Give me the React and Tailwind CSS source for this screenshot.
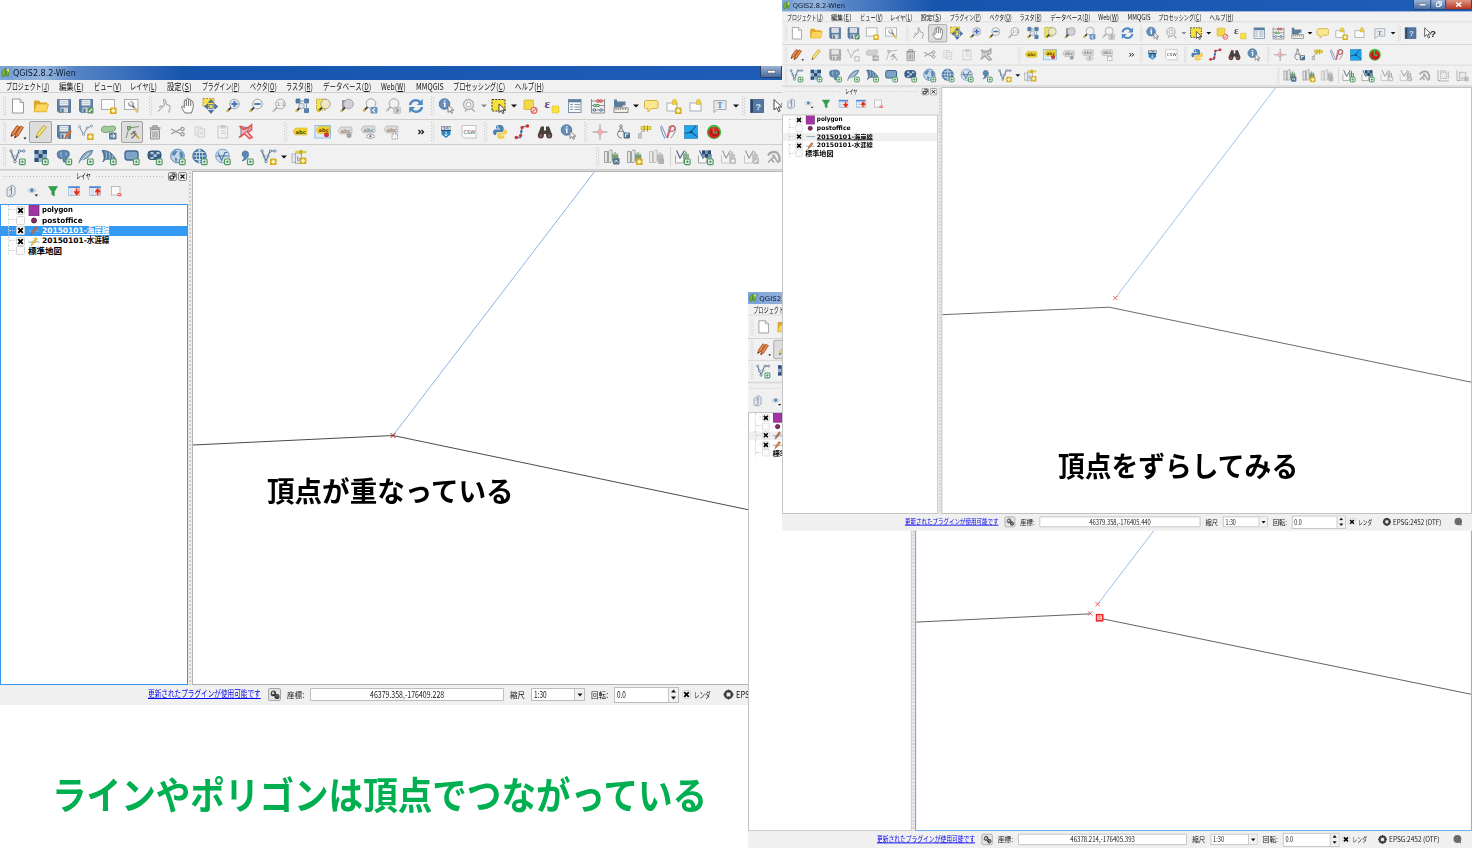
import React, { useLayoutEffect, useRef } from "react";

/* Text squeezed horizontally so that it fills exactly `w` pixels. */
function Fit({ w, className = "", children }) {
  const ref = useRef(null);
  useLayoutEffect(() => {
    const el = ref.current;
    const fit = () => {
      el.style.transform = `scaleX(${w / el.offsetWidth})`;
    };
    fit();
    document.fonts?.ready.then(fit);
  }, [w]);
  return (
    <span className="flex shrink-0 items-center" style={{ width: w }}>
      <span ref={ref} className={`inline-block shrink-0 origin-left whitespace-nowrap ${className}`}>
        {children}
      </span>
    </span>
  );
}

/* ---------- icon parts, drawn on a 20 x 20 grid ---------- */

const Plus = ({ x = 11, y = 11.5 }) => (
  <g>
    <rect x={x + 0.5} y={y + 0.5} width="5.6" height="5.6" rx="1" fill="#f2faf2" stroke="#4f9560" strokeWidth="1.2" />
    <path d={`M${x + 3.3} ${y + 1.8}v3M${x + 1.8} ${y + 3.3}h3`} stroke="#4f9560" strokeWidth="1" />
  </g>
);
const Star = ({ x = 11, y = 11.5 }) => (
  <g>
    <rect x={x} y={y} width="6.6" height="6.6" rx="1.2" fill="#d5ab20" />
    <circle cx={x + 3.3} cy={y + 3.3} r="1.7" fill="#fff6b8" />
    <path d={`M${x + 3.3} ${y + 1}v4.600M${x + 1} ${y + 3.3}h4.600`} stroke="#fff6b8" strokeWidth="0.8" />
  </g>
);
const Lens = ({ cx = 11.5, cy = 8, r = 4.8, fill = "#eef2f4", handle = "#3a3a3a", tip = "#e2c02a" }) => (
  <g>
    <path d={`M${cx - r * 0.7} ${cy + r * 0.7}L${cx - r - 2.5} ${cy + r + 2.5}`} stroke={handle} strokeWidth="1.900" />
    <path d={`M${cx - r - 1.2} ${cy + r + 1.2}L${cx - r - 3} ${cy + r + 3}`} stroke={tip} strokeWidth="1.700" />
    <circle cx={cx} cy={cy} r={r} fill={fill} stroke="#a3a6a3" strokeWidth="1" />
  </g>
);
const Floppy = () => (
  <g>
    <path d="M3.500 3.500h13v13h-11.500l-1.500-1.500z" fill="#5b7fa5" stroke="#4b6a8c" strokeWidth=".8" />
    <rect x="5.600" y="3.800" width="8.800" height="5.700" fill="#e9ecef" />
    <path d="M6.500 5.500h7M6.500 7.500h7" stroke="#b9bec4" strokeWidth=".7" />
    <rect x="6.500" y="11.500" width="7.500" height="5" fill="#d7dadd" />
    <rect x="7.500" y="12.500" width="2" height="4" fill="#4b6a8c" />
  </g>
);
const VLine = () => (
  <g fill="#dce6ee" stroke="#4d6c8a" strokeWidth=".7">
    <path d="M3 4l4 10.500L11 4h4.500" fill="none" strokeWidth="1.100" />
    <circle cx="3" cy="4" r="1.200" /><circle cx="5" cy="9.200" r="1.100" /><circle cx="7" cy="14.500" r="1.300" />
    <circle cx="9" cy="9.200" r="1.100" /><circle cx="11.500" cy="4" r="1.200" /><circle cx="15.800" cy="4" r="1.200" />
  </g>
);
const Globe = ({ land }) => (
  <g>
    <circle cx="9.500" cy="9" r="6.800" fill={land ? "#c3d6e7" : "#416f9e"} stroke="#4f7ba5" strokeWidth=".9" />
    {land ? (
      <path d="M4.500 5.500l2.500-2 2.500.8-1.500 2.200-1.500 2.500-2.500-1zM11.500 4l3 1.500 1 3.500-2 3-1.800-2.300zM7 10.500l2.500 1.200-1 3-1.500-1z" fill="#5b88b2" />
    ) : (
      <path d="M3 9h13M4.500 5.500h10M4.500 12.500h10M9.500 2.500v13M9.500 2.500c-4.500 4-4.500 9 0 13M9.500 2.500c4.500 4 4.500 9 0 13" fill="none" stroke="#dbe8f2" strokeWidth=".9" />
    )}
  </g>
);
const Label = ({ c = "#f2d22e", t = "#5b4a00", y = 6 }) => (
  <g>
    <path d={`M3 ${y + 3.5}l2.500-3.500h10.500q1 0 1 1v5q0 1-1 1h-10.500z`} fill={c} stroke={t === "#909090" ? "#aaa" : "#c9b136"} strokeWidth=".6" />
    <text x="5.500" y={y + 5.5} fontSize="5.200" fontWeight="bold" fontFamily="DejaVu Sans" fill={t}>abc</text>
  </g>
);
const Sheet = ({ x = 3, y = 4, w = 11, h = 10 }) => (
  <rect x={x} y={y} width={w} height={h} fill="#fbfbfb" stroke="#a2a6a9" strokeWidth=".9" />
);
const Books = () => (
  <g fill="#e4e6e6" stroke="#8d9092" strokeWidth=".8">
    <path d="M2.500 4.500v11h3v-11zM6.500 4.500l1.500-1.500h2v11.500l-1 1H6.500z" />
    <rect x="10" y="8" width="6.500" height="7.500" fill="#9fb09f" stroke="none" />
    <path d="M11 13V6.500M13 13V5M15 13V6.500" stroke="#5d8b5d" strokeWidth="1.100" fill="none" />
  </g>
);
const VSheet = () => (
  <g>
    <path d="M2.500 8.500v7.500h8v-3" fill="#f7f7f7" stroke="#a3a8a3" strokeWidth="1" />
    <path d="M3.500 3.500l3.500 7.500 4.500-7.500" fill="none" stroke="#4a6580" strokeWidth="1.100" />
    <path d="M11 12.500V6.500M13 12V4.500M15 12V7" fill="none" stroke="#4d8055" strokeWidth="1.200" />
  </g>
);
const Cursor = ({ x = 11, y = 9 }) => (
  <path d={`M${x} ${y}v7.500l2-1.800 1.400 2.700 1.200-.6-1.400-2.600h2.700z`} fill="#f5f5f5" stroke="#6b6b6b" strokeWidth=".8" />
);

const icons = {
  doc: <g><path d="M4.500 3h7.500l3.500 3.500V17h-11z" fill="#fff" stroke="#8a8e91" strokeWidth=".9" /><path d="M12 3v3.500h3.500" fill="#e4e6e8" stroke="#8a8e91" strokeWidth=".8" /></g>,
  folder: <g><path d="M3 15.500V4.500h5l1.500 2h6.500v9z" fill="#dba72b" /><path d="M3 15.800L5.500 8h12l-2.200 7.800z" fill="#fbd65a" stroke="#dba72b" strokeWidth=".7" /></g>,
  save: <Floppy />,
  saveas: <g><Floppy /><rect x="11.500" y="11.500" width="6" height="6" rx="1" fill="#5c9768" /><path d="M13 16l3-3" stroke="#e8f5e8" strokeWidth="1.300" /></g>,
  composer: <g><Sheet x={2.5} y={3.5} w={13} h={10} /><Star /></g>,
  manager: <g><Sheet x={2.5} y={3.5} w={13.5} h={10} /><path d="M10 9l2.500 3" stroke="#666" strokeWidth="1.800" /><path d="M12.500 12l3.500 4.500" stroke="#dfc26a" strokeWidth="2.200" /><circle cx="9" cy="8" r="2.300" fill="#e0e3e6" stroke="#7c8083" /><path d="M7.500 5.500l1.500 2.200" stroke="#fff" strokeWidth="1.500" /></g>,
  touch: <g><path d="M5 11l3-1.500-1-5.500c.3-1.300 1.600-1 1.900.1l1.100 4.400 2.700.8c1.200.6 1 2 .4 4l-.9 3.200" fill="#f3f3f3" stroke="#8b8b8b" strokeWidth=".9" transform="translate(1.500 0)" /><path d="M3 15.500l4.500-4.500M4 11.500l2.500-2" stroke="#8b8b8b" fill="none" /></g>,
  hand: <path d="M7 17c-2-3-3.500-5-3.300-6.500.8-.8 1.800 0 2.600 1.200V5c.4-1.300 1.700-1.300 2 0V3.200c.5-1.200 1.900-1.200 2.200 0V4c.5-1.100 1.800-1 2.100.1v1.200c.5-1 1.900-.8 2.100.3 1 3.500.8 5-.2 8L13.500 17zM8.300 5v5M10.500 4v6M12.700 5v5" fill="#fbfbfb" stroke="#666" strokeWidth=".9" />,
  pansel: <g><path d="M3 2.500h11v8H3z" fill="#fbe04d" stroke="#a6851c" strokeDasharray="2 1" strokeWidth=".8" /><path d="M11 3.500l2.700 3h-5.400zM11 17.500l2.700-3.200h-5.400zM4.500 10.500l3.200-2.700v5.400zM17.800 10.500l-3.200-2.700v5.400z" fill="#4671a8" stroke="#355a8c" strokeWidth=".6" /><rect x="9" y="8.500" width="4" height="4" fill="#f4dd55" stroke="#4671a8" strokeWidth=".8" /></g>,
  zin: <g><Lens fill="#dce6f2" /><path d="M11.500 5v6M8.500 8h6" stroke="#4973b2" strokeWidth="1.900" /></g>,
  zout: <g><Lens fill="#eef0f2" /><path d="M8.500 8h6" stroke="#4973b2" strokeWidth="1.900" /></g>,
  znat: <g><Lens fill="#f4f4f2" handle="#b0b0b0" tip="#c4c4c4" /><text x="8" y="10" fontSize="5" fontFamily="DejaVu Sans" fill="#777">1:1</text></g>,
  zfull: <g><path d="M4 3h4v4H4zM12.500 3h4v4h-4zM12.500 12.500h4v4h-4z" fill="#4f7fae" stroke="#3a6390" strokeWidth=".7" /><path d="M7 5h6M14.500 6v8M7 7l6 6" stroke="#7c9cbc" strokeWidth="1" /><Lens cx={9.5} cy={10} r={2.8} fill="#dbe4ec" /></g>,
  zsel: <g><rect x="2.500" y="3" width="9" height="11" fill="#f8e34a" stroke="#8e7d12" strokeDasharray="1.500 1" strokeWidth=".7" /><Lens fill="#ece9c0" /></g>,
  zlayer: <g><rect x="5" y="4" width="8" height="8" fill="#9b92a3" /><Lens fill="#d4cfd8" /></g>,
  zlast: <g><Lens cx={11} cy={7.5} /><rect x="10.500" y="11" width="7" height="6.500" rx="1" fill="#6b94c2" /><path d="M15 12.300l-2.300 2 2.300 2" fill="none" stroke="#fff" strokeWidth="1.100" /></g>,
  znext: <g><Lens cx={11} cy={7.5} handle="#b0b0b0" tip="#c4c4c4" /><rect x="10.500" y="11" width="7" height="6.500" rx="1" fill="#d0d2d0" stroke="#aaa" strokeWidth=".5" /><path d="M13 12.300l2.300 2-2.300 2" fill="none" stroke="#888" strokeWidth="1.100" /></g>,
  refresh: <g fill="none" stroke="#5289c2" strokeWidth="2.400"><path d="M4 9c1-5 7.500-6.500 10.500-2.500M16 11c-1 5-7.500 6.500-10.500 2.500" /><path d="M16.800 3v6h-6zM3.200 17v-6h6z" fill="#5289c2" stroke="none" /></g>,
  identify: <g><circle cx="8.500" cy="8" r="5.300" fill="#628fbb" stroke="#476f98" strokeWidth=".8" /><path d="M7.500 7.300h1.300v3.700M8.700 4.200v1.400" stroke="#fff" strokeWidth="1.500" fill="none" /><Cursor x={12} y={9} /></g>,
  action: <g><circle cx="9.500" cy="8.500" r="5" fill="#ededed" stroke="#b0b0b0" strokeWidth="1.300" /><circle cx="9.500" cy="8.500" r="2.300" fill="#fff" stroke="#a8a8a8" /><path d="M12 12l4 4M8 13.500l-2 2" stroke="#b0b0b0" strokeWidth="1.500" /></g>,
  select: <g><rect x="3" y="3.500" width="13" height="11.500" fill="#f7e23c" stroke="#333" strokeWidth="1" strokeDasharray="2 1.200" /><path d="M10 8v8.500l2.200-2 1.500 3 1.300-.7-1.500-2.900h3z" fill="#fff" stroke="#222" strokeWidth=".8" /></g>,
  desel: <g><rect x="4" y="4" width="9.500" height="9.500" rx="1" fill="#f3d84a" stroke="#d0ae23" strokeWidth=".7" /><circle cx="14" cy="14.300" r="3" fill="#fbe3e3" stroke="#de6666" strokeWidth="1.200" /><path d="M12 16.300l4-4" stroke="#de6666" strokeWidth="1.100" /></g>,
  expr: <g><text x="2.500" y="11.500" fontSize="13" fontWeight="bold" fontFamily="Liberation Serif" fill="#6b3d78">ε</text><rect x="10" y="10" width="7" height="7" rx="1" fill="#f9e23c" stroke="#caa923" strokeWidth=".7" strokeDasharray="1.500 1" /></g>,
  table: <g><rect x="3.500" y="3.500" width="12.500" height="13" fill="#f7f7f7" stroke="#7188a0" strokeWidth=".9" /><path d="M3.500 5h12.500" stroke="#5b7f9e" strokeWidth="2.600" /><path d="M5 8.500h3M5 11h3M5 13.500h3M9.500 8.500h5.500M9.500 11h5.500M9.500 13.500h5.500" stroke="#88a1b9" strokeWidth="1.100" /></g>,
  abacus: <g><path d="M3.500 3v14M16.500 3v14M3.500 5h13M3.500 9.500h13M3.500 14h13M3.500 17h13" stroke="#8b8b8b" strokeWidth="1" /><g fill="#fff" strokeWidth="1.100"><circle cx="10" cy="5" r="1.200" stroke="#c83737" /><circle cx="13" cy="5" r="1.200" stroke="#c83737" /><circle cx="7" cy="9.500" r="1.200" stroke="#48945b" /><circle cx="10" cy="9.500" r="1.200" stroke="#48945b" /><circle cx="6.500" cy="14" r="1.200" stroke="#4d78a8" /><circle cx="13" cy="14" r="1.200" stroke="#4d78a8" /></g></g>,
  measure: <g><path d="M3 3.500h3v2h8.500v4H11.500v1.500H3z" fill="#5b7d9c" /><rect x="3" y="11.800" width="14" height="4.700" fill="#f0f0e8" stroke="#777" strokeWidth=".8" /><path d="M5 12v2M7.300 12v2M9.600 12v2M12 12v2M14.500 12v2" stroke="#555" strokeWidth=".7" /></g>,
  tip: <path d="M4.500 4.500h11.500l1 1v6l-1 1H10.500l-3.500 3.500v-3.500H4.500l-1-1V5.500z" fill="#fae88f" stroke="#d0b040" strokeWidth="1" />,
  bmnew: <g><Sheet x={3} y={7} w={10} h={8} /><path d="M8.500 4.500l2-1.500 2 1.500v4h-4z" fill="#f0d233" stroke="#c5ab2e" strokeWidth=".5" /><Star /></g>,
  bm: <g><Sheet x={4} y={7} w={11} h={8} /><path d="M10.500 4.500l2-1.500 2 1.500v4h-4z" fill="#f0d233" stroke="#c5ab2e" strokeWidth=".5" /></g>,
  text: <g><path d="M4 4.500h12v9H7.500l-3.500 3z" fill="#e9ecef" stroke="#9aa3ac" strokeWidth=".9" /><text x="7.300" y="12" fontSize="8" fontWeight="bold" fontFamily="Liberation Serif" fill="#6b8197">T</text></g>,
  help: <g><rect x="3.500" y="3.500" width="13" height="13" fill="#5378a3" stroke="#3f5d80" strokeWidth=".8" /><path d="M5 3.500v13" stroke="#2c4562" strokeWidth="2" /><text x="8.500" y="13.500" fontSize="9" fontFamily="Liberation Sans" fontWeight="bold" fill="#dbe6f2">?</text></g>,
  what: <g><path d="M4 3.500v10.500l2.600-2.300 2 4 1.600-.8-2-3.900h3.600z" fill="#fff" stroke="#333" strokeWidth=".9" /><text x="10.500" y="15" fontSize="12" fontFamily="Liberation Sans" fontWeight="bold" fill="#222">?</text></g>,

  pencils: <g><path d="M3 14.500l1-4L9 3.500l2.500 1.500-5 7.500zM6.500 16l1-4 5-8L15.500 5.500l-5.500 8.500z" fill="#dc6f2b" stroke="#8d4420" strokeWidth=".7" /><path d="M5 12L10 4.500M9 13L14 5" stroke="#f3ae80" strokeWidth=".9" /><path d="M3 14.500l.5-1.900 1.200.8zM6.500 16l.5-1.900 1.200.7z" fill="#222" /><path d="M15.500 15.500h3l-1.500 2z" fill="#111" /></g>,
  pencil: <g><path d="M5 16l.8-3.800L12.500 3.500l2.700 2-7 8.800z" fill="#ecd654" stroke="#b09a35" strokeWidth=".7" /><path d="M7.300 13l6-8" stroke="#fff" strokeOpacity=".5" /><path d="M5 16l.5-2 1.400 1.100z" fill="#333" /></g>,
  saveedit: <g><Floppy /><path d="M11 16.500l.8-3L15.500 8l2 1.400-4.200 6z" fill="#de7a3a" stroke="#a9562b" strokeWidth=".6" /></g>,
  addfeat: <g><path d="M3 4l4.500 8.500L11 6l4.500-2" fill="none" stroke="#7189a2" strokeWidth="1" /><g fill="#e8edf2" stroke="#7189a2" strokeWidth=".7"><circle cx="3.500" cy="4.500" r="1.100" /><circle cx="7.500" cy="12.500" r="1.100" /><circle cx="11" cy="6" r="1.100" /><circle cx="15.500" cy="4" r="1.100" /></g><Star /></g>,
  movefeat: <g><path d="M2.500 8c0-4.500 3.500-4 6-3.500s8-2 8 1.500-3.500 3.500-6 4S2.500 11.500 2.500 8z" fill="#a5c99e" stroke="#6f9869" strokeWidth=".9" /><rect x="10" y="10.500" width="7.500" height="7" rx="1" fill="#5d809e" /><path d="M11.500 14h4.500M14 12l2 2-2 2" fill="none" stroke="#fff" strokeWidth="1" /></g>,
  node: <g><path d="M4 16L7 6l10-1.500" fill="none" stroke="#7d8d7b" strokeWidth="1" /><rect x="5.500" y="4.500" width="2.800" height="2.800" fill="#9bc58d" stroke="#567a4d" strokeWidth=".7" /><path d="M9 12.500l4.500-3.500M11 9.500l3 3.500" stroke="#6b6b6b" strokeWidth="1.500" /><path d="M13 12l4 4.500" stroke="#cfa42a" strokeWidth="1.800" /><path d="M9.500 16.500l5-5" stroke="#777" strokeWidth="1.200" /></g>,
  trash: <g fill="none" stroke="#959595" strokeWidth="1"><path d="M4.500 6h11M8 6V4h4v2" strokeWidth="1.300" /><path d="M5.500 7.500h9v9.500h-9z" fill="#dadada" /><path d="M8 9.500v6M10 9.500v6M12 9.500v6" /></g>,
  cut: <g fill="none" stroke="#999" strokeWidth="1.200"><path d="M3 7l10 5M3 12l10-5" /><circle cx="14.500" cy="7" r="1.700" /><circle cx="14.500" cy="12.300" r="1.700" /></g>,
  copy: <g fill="#f1f1f1" stroke="#cdcdcd"><rect x="5" y="5" width="6" height="8" /><rect x="8" y="7" width="6.500" height="8" /><path d="M9.500 10h3.500M9.500 12h3.500" /></g>,
  paste: <g fill="#f1f1f1" stroke="#cacaca"><rect x="5" y="4.500" width="9.500" height="11.500" /><rect x="8" y="3.500" width="4" height="2.500" fill="#c8c8c8" /><path d="M8 9h4.500M8 11.500h4.500" /></g>,
  crossed: <g><path d="M5 4.500v10.500L14 6z" fill="#f0b7b7" stroke="#6d7ba3" strokeWidth="1" /><path d="M3.500 4l4.500 3.500 5-2.500 2.500-2v5l-4 2 4.500 5.500-2.500 1-5-5-5.500 4" fill="none" stroke="#e65353" strokeWidth="1.700" /></g>,
  label: <Label />,
  labelpin: <g><rect x="2" y="3.500" width="15.500" height="12.500" fill="#dcecf8" stroke="#8ab8de" strokeWidth=".9" /><Label y={4.5} /><circle cx="13.500" cy="12.800" r="2.500" fill="#c83a3a" /></g>,
  labelpin2: <g><Label c="#dcdcdc" t="#909090" y={5} /><circle cx="14" cy="13.500" r="2.500" fill="#a2a2a2" /></g>,
  labeleye: <g><Label c="#dcdcdc" t="#909090" y={4} /><path d="M8 14.500c2.500-3 6.500-3 9 0-2.500 2.500-6.500 2.500-9 0z" fill="#fff" stroke="#999" /><circle cx="12.500" cy="14.300" r="1.200" fill="#888" /></g>,
  labelmove: <g><Label c="#dcdcdc" t="#909090" y={4} /><path d="M11 12h5.500v5H11z" fill="#f6f6f6" stroke="#9a9a9a" strokeDasharray="2 1" /></g>,
  more: <path d="M7.500 8l2 2-2 2M10.500 8l2 2-2 2" fill="none" stroke="#111" strokeWidth="1.200" />,
  bgb: <g><rect x="5" y="4.500" width="10" height="4.500" fill="#2c4a66" /><text x="5.300" y="8.400" fontSize="4.200" fontWeight="bold" fontFamily="DejaVu Sans" fill="#fff">BGB</text><path d="M5.500 9h9v3.500L10 16 5.500 12.500z" fill="#2f83c2" /><path d="M10 9.500v4.500M8.500 12.500l1.500 1.500 1.500-1.500" stroke="#d4ebfb" fill="none" /></g>,
  csw: <g><path d="M3 3.500h14v12.500H5l-2-2z" fill="#fbfbfb" stroke="#b8b8b8" strokeWidth=".8" /><text x="4.600" y="11.500" fontSize="5" fontFamily="DejaVu Sans" fill="#444">CSW</text></g>,
  python: <g><path d="M9.500 3c-3.500 0-3.500 1.300-3.500 3.500h4v1H4.500c-2 1-2 5 .3 5.500H6c0-2.500 1-3 2.700-3h3.500c1 0 1.500-1 1.500-1.700C13.700 4.300 13 3 9.500 3z" fill="#4a80b3" /><path d="M11 17c3.500 0 3.500-1.300 3.500-3.500h-4v-1H16c1.800-1 1.500-4.800-.7-5.200h-.8c0 2.500-1 3.300-2.700 3.300H8.300c-1 0-1.300 1-1.300 1.700C7 16 7.500 17 11 17z" fill="#f3cf55" /><circle cx="8" cy="5" r=".7" fill="#fff" /></g>,
  route: <g><path d="M4.500 15.500h4L10 5l5.500-1" stroke="#5c80b5" strokeWidth="1.400" fill="none" /><g fill="#d32c2c"><circle cx="4.300" cy="15.500" r="1.700" /><circle cx="8.500" cy="13.500" r="1.600" /><circle cx="10" cy="5.500" r="1.600" /><circle cx="15.500" cy="4" r="1.700" /></g><circle cx="9.300" cy="9.500" r="1.300" fill="#3f67a5" /></g>,
  binoc: <g fill="#47403c"><path d="M6 4.500h3v4h2v-4h3l3 8-3.500 3.500-2.500-4h-2l-2.500 4-3.500-3.500z" /><circle cx="5.800" cy="13.500" r="3" /><circle cx="14.200" cy="13.500" r="3" /><circle cx="5.800" cy="13.700" r="1.500" fill="#9b5a4a" /><circle cx="14.200" cy="13.700" r="1.500" fill="#9b5a4a" /></g>,
  cross: <g><path d="M2.500 10h15M10 2.500v15" stroke="#8b8b8b" strokeWidth=".9" /><circle cx="10" cy="10" r="2.500" fill="#fff" stroke="#dd8080" strokeWidth=".8" /><path d="M8 10h4M10 8v4" stroke="#d87070" strokeWidth=".8" /></g>,
  person: <g><circle cx="8" cy="4.300" r="1.300" fill="none" stroke="#777" /><path d="M7.500 6L4.500 11.500c0 3 2 4.500 4 4.500M8.500 6l3 5M6 9.500c2-.5 3.500 0 4.500 1" fill="none" stroke="#777" strokeWidth="1" /><rect x="10.500" y="10.500" width="6.500" height="6" rx="1" fill="#4d718c" /><path d="M12.500 15v-3h3" stroke="#fff" fill="none" /></g>,
  sat: <g><path d="M6 4.500h10v3H6z" fill="#eedb3a" stroke="#b9a62d" strokeWidth=".6" /><path d="M9.300 3.500v6M12.500 3.500v6" stroke="#a8971e" /><path d="M9 9C6.500 9 5 11 5 13" fill="none" stroke="#999" strokeWidth="1" /><rect x="3.500" y="12" width="2.800" height="4" fill="#d8dce0" stroke="#999" strokeWidth=".7" /></g>,
  vr: <g><path d="M3.500 3.500l5.500 12.500L11.500 4" fill="none" stroke="#9a7fb0" strokeWidth="1" /><path d="M2.500 4.500c1 5 2.500 9 4.500 12" fill="none" stroke="#6d9dd0" strokeWidth="1.100" /><path d="M9.500 16l3.500-11.500c2-1 4-.5 4 1.500s-2 3.500-4.500 3.500" fill="none" stroke="#d65555" strokeWidth="1.300" /><path d="M11 5.500c2-2.500 6-2.500 6.500.5s-2 7-4.500 10" fill="none" stroke="#777" strokeWidth=".8" /></g>,
  tri: <g><rect x="3.500" y="3.500" width="13" height="13" fill="#1fa6ee" /><path d="M3.500 11.500l6.500-1.500 5-6.500M10 10l6.500 5" stroke="#1d5480" strokeWidth="1.100" fill="none" /><circle cx="10" cy="10" r="1.200" fill="#123f63" /><rect x="3.500" y="3.500" width="13" height="13" fill="none" stroke="#3d7fae" strokeWidth=".7" /></g>,
  swirl: <g><circle cx="10" cy="10" r="7.200" fill="#45b945" /><circle cx="10" cy="10.500" r="5.800" fill="#d92424" /><path d="M9.500 3v6c0 2.500 3 2.500 3.500.5" fill="none" stroke="#45b945" strokeWidth="1.300" /><path d="M7.500 8c-1.500 3.500 1 6 4 5.500s3.500-2.500 3-4.500" fill="none" stroke="#8a1212" strokeWidth="1" /></g>,

  vadd: <g><VLine /><Plus /></g>,
  raster: <g><path d="M3.500 3h12.500v12H3.500z" fill="#94b3d0" /><path d="M3.500 3h4v4h-4zM11.500 3H16v4h-4.500zM7.500 7h4v4h-4zM3.500 11h4v4h-4zM11.500 11H16v4h-4.500z" fill="#2f5075" /><Plus /></g>,
  pg: <g><path d="M4 10.500C2.500 6 3.500 4 6 4c2-1 7-1 8.500.5 1.800 2.500.5 5.500-1.500 6.500l-1 1v3H9.500l-1-4.500-1.500 1.500z" fill="#5a86b0" stroke="#456c92" strokeWidth=".8" /><path d="M7 5v3.500l1 1.500M12 5.500v3" stroke="#c5d7e7" fill="none" strokeWidth=".8" /><Plus x={11.5} /></g>,
  feather: <g><path d="M3 16.500C4.500 9 9.500 3.500 16.500 3.500c-.5 4-4.500 8-11 9.500" fill="#8eabc5" stroke="#4d6f90" strokeWidth=".9" /><path d="M3 16.500L13 6" stroke="#e1e9f0" strokeWidth=".9" /><Plus /></g>,
  mssql: <g><path d="M3 3.500c6-.5 11 3 13.500 8.500l-5 .5C8 11.500 5 12.500 4 15 6 11 5 7 3 3.500z" fill="#557ca3" stroke="#3a5f82" strokeWidth=".8" /><path d="M6.500 4.500c1.500 3 1.500 5 0 7.500M10 5.500c1.200 2.500 1.300 4.500.5 6.500M13.500 8c.5 1.500.5 2.500 0 4" fill="none" stroke="#c9d8e5" strokeWidth=".8" /><Plus /></g>,
  oracle: <g><rect x="3" y="4" width="13" height="9" rx="2.500" fill="#7fa3c6" stroke="#406890" strokeWidth="1.300" /><Plus /></g>,
  oraras: <g><rect x="3" y="4" width="13" height="8.500" rx="3" fill="#3a5d85" stroke="#34557c" /><path d="M5.500 5h3v2.300h-3zM11.500 5h3v2.300h-3zM8.500 7.300h3V10h-3zM5.500 10h3v2h-3z" fill="#b5cadd" /><Plus /></g>,
  wms: <g><Globe land /><Plus /></g>,
  wcs: <g><Globe /><Plus /></g>,
  wfs: <g><circle cx="9.500" cy="9" r="6.800" fill="#d3e1ee" stroke="#7f9fbe" /><path d="M5 5.500l3.500 8 3.500-8h2.500M3.500 9h12" fill="none" stroke="#4b739b" strokeWidth="1.100" /><Plus /></g>,
  comma: <g><path d="M8.500 4c3-.5 4.500 1.500 4 4.500S8.500 13.500 6 14c1.500-1.500 2.200-2.800 2.200-4C5.500 9.500 5.500 4.500 8.500 4z" fill="#5a88b5" stroke="#44709b" strokeWidth=".7" /><Plus /></g>,
  vnew: <g><VLine /><Star /></g>,
  gps: <g><rect x="3" y="7" width="4" height="8.500" fill="#ebebeb" stroke="#a8a8a8" strokeWidth=".8" /><rect x="6.500" y="6" width="6" height="10.500" fill="#e4ecf3" stroke="#9c9c9c" strokeWidth=".8" /><path d="M8.500 9v5M8.500 11.500h2v2.500h-2" stroke="#7d9cc0" strokeWidth=".8" fill="none" /><path d="M6.500 5h11" stroke="#dccb45" strokeWidth="2.400" /><rect x="10.500" y="3" width="2.800" height="4.300" fill="#c6b01f" /><Star x={10.8} y={10.5} /></g>,
  bk1: <g><Books /><rect x="11" y="11" width="6.500" height="6.500" rx="1" fill="#55768d" /><path d="M12.500 15.500l1.700-2.500 1.700 2.500" stroke="#e3ebf0" fill="none" /></g>,
  bk2: <g><Books /><Star /></g>,
  bk3: <g><Books /><rect x="11.500" y="11.500" width="5.500" height="5.500" fill="#888" /></g>,
  vs1: <g><VSheet /><Plus /></g>,
  vs2: <g><VSheet /><path d="M6 3.500h9v7H6z" fill="#6e93b5" /><path d="M6 3.500h3v3.500H6zM12 3.500h3v3.500h-3zM9 7h3v3.500H9z" fill="#2c4b6b" /><Plus /></g>,
  vs3: <g><VSheet /><rect x="11" y="11" width="6" height="6" rx="1" fill="#999" /><circle cx="14" cy="14" r="1.700" fill="#f5f5f5" /></g>,
  vs4: <g><VSheet /><rect x="11" y="11" width="6" height="6" rx="1" fill="#999" /><path d="M12.500 15.500l3-3" stroke="#f5f5f5" strokeWidth="1.200" /></g>,
  tools: <g fill="none" stroke="#777"><path d="M4 8.500c2-3.500 6-4.500 9.500-2.500l2 4v5" strokeWidth="2.200" /><path d="M4 15.500l7-7M8.500 7.500l6 8.500M7 12l3 3.500" strokeWidth="1.700" /></g>,
  sheet1: <g><path d="M3 3.500v12.500h3M4 16.500h12" stroke="#777" fill="none" /><rect x="6" y="6" width="7.500" height="7.500" fill="#e8e8e8" stroke="#777" strokeDasharray="2 1" /><path d="M15.500 5v9M5 4.500h8" stroke="#888" /></g>,
  sheet2: <g><path d="M3 3.500v12.500h3M4 15.500h7" stroke="#777" fill="none" /><rect x="6" y="6" width="7.500" height="7" fill="#e8e8e8" stroke="#888" /><rect x="11.500" y="11.500" width="5.500" height="5.500" rx="1" fill="#999" /></g>,

  lgroup: <g><path d="M6 7.500l5-3.500 3 2v7.500l-3.500 2.500-4.500-1z" fill="#e5e9ee" stroke="#8d9aa8" strokeWidth=".9" /><path d="M10.500 5.500v8l-2 1.500M8.500 9.500l2-2.500" fill="none" stroke="#7187a0" strokeWidth="1" /></g>,
  leye: <g><path d="M5.500 9.500c2.500-3 6-3 8.500 0-2.500 2.500-6 2.500-8.500 0z" fill="#e9f0f6" stroke="#a3b3c2" strokeWidth=".8" /><circle cx="9.800" cy="9.200" r="1.700" fill="#557ca2" /><path d="M12.500 13.500h3.500l-1.700 2z" fill="#111" /></g>,
  lfilter: <path d="M5.500 5.500h9l-3.200 5v4.500l-2.500-1.500v-3z" fill="#2e9f47" stroke="#3f9a55" strokeWidth=".7" />,
  lexp: <g><rect x="4.800" y="5.500" width="10.500" height="9" fill="#f6faff" stroke="#7fa5d0" strokeWidth=".7" /><path d="M4.500 6.300h11" stroke="#4a86d8" strokeWidth="1.600" /><path d="M6 9h3M6 11h3M6 13h3" stroke="#9fc0e2" strokeWidth=".9" /><rect x="10.300" y="7.500" width="5" height="7" fill="#f7b8a8" /><path d="M12.700 7.500v4M10.700 11h4l-2 2.700z" stroke="#e2301d" strokeWidth="1.300" fill="#e2301d" /></g>,
  lcol: <g><rect x="4.800" y="5.500" width="10.500" height="9" fill="#f6faff" stroke="#7fa5d0" strokeWidth=".7" /><path d="M4.500 6.300h11" stroke="#4a86d8" strokeWidth="1.600" /><path d="M6 9h3M6 11h3M6 13h3" stroke="#9fc0e2" strokeWidth=".9" /><rect x="10.300" y="7.500" width="5" height="7" fill="#f7b8a8" /><path d="M12.700 14v-4M10.700 10.700h4l-2-2.700z" stroke="#e2301d" strokeWidth="1.300" fill="#e2301d" /></g>,
  lremove: <g><rect x="5.500" y="5.500" width="8.500" height="8.500" fill="#fafafa" stroke="#b0b0b0" strokeWidth=".8" /><rect x="11.500" y="12" width="4" height="3.200" rx=".8" fill="#e06060" /><path d="M12.300 13.600h2.400" stroke="#fff" strokeWidth=".8" /></g>,
};

function Icon({ name, off, on, w = 22.8 }) {
  return (
    <span
      className={`flex h-[22.500px] shrink-0 items-center justify-center rounded-[2px] ${on ? "border border-[#a2a2a2] bg-[#dddddd]" : ""}`}
      style={{ width: w }}
    >
      <svg width="20" height="20" viewBox="0 0 20 20" className={`shrink-0 ${off ? "opacity-60 grayscale" : ""}`}>
        {icons[name]}
      </svg>
    </span>
  );
}

const Arrow = ({ light }) => (
  <span className="flex w-[7.400px] shrink-0 items-center justify-center">
    <svg width="6" height="4" viewBox="0 0 6 4"><path d="M0 .5h6l-3 3z" fill={light ? "#8b8b8b" : "#111"} /></svg>
  </span>
);

function Grip({ w = 10 }) {
  return (
    <span className="flex shrink-0 justify-end" style={{ width: w }}>
      <svg width="4" height="20" viewBox="0 0 4 20" className="shrink-0">
        {[0, 3, 6, 9, 12, 15, 18].map((y) => (
          <g key={y} fill="#cbcbcb"><rect x="0" y={y} width="1.200" height="1.200" /><rect x="2" y={y + 1.5} width="1.200" height="1.200" /></g>
        ))}
      </svg>
    </span>
  );
}

const Bar = ({ children, className }) => (
  <div className={`flex shrink-0 items-center border-b border-[#cdcdcd] bg-[#f1f1f1] ${className}`}>{children}</div>
);

/* Name, mnemonic letter, width. */
const menus = [
  ["プロジェクト", "J", 43], ["編集", "E", 25], ["ビュー", "V", 27], ["レイヤ", "L", 27], ["設定", "S", 25],
  ["プラグイン", "P", 38], ["ベクタ", "O", 27], ["ラスタ", "R", 27], ["データベース", "D", 48], ["Web", "W", 25],
  ["MMQGIS", "", 28], ["プロセッシング", "C", 52], ["ヘルプ", "H", 29],
];

function TitleBar() {
  return (
    <div className="flex h-[13.500px] shrink-0 items-center bg-linear-to-r from-[#7fa6d6] via-[#1655ae] via-22% to-[#1f5db8] pl-px">
      <svg width="10" height="12" viewBox="0 0 10 12" className="shrink-0">
        <path d="M1.500 9.500C0 6 2 2 5 1.500L4 9zM5 5l3.500-3.500L7 9.500 5 8z" fill="#7cb63a" stroke="#3f7a22" strokeWidth=".7" />
        <path d="M5.500 2.500l3-1-1 4z" fill="#f1e44b" />
      </svg>
      <div className="ml-[2px] flex h-full items-center bg-linear-to-r from-white/10 via-white/30 to-white/0">
        <Fit w={63} className="font-['DejaVu_Sans','Noto_Sans_CJK_JP',sans-serif] text-[8.500px] leading-none text-[#0b1a33]">QGIS2.8.2-Wien</Fit>
      </div>
      <div className="ml-auto flex h-[11.500px] self-start overflow-hidden rounded-b-[3px] border border-t-0 border-[#2d3f5e]">
        <span className="flex w-[21px] items-center justify-center border-r border-[#2d3f5e] bg-linear-to-b from-[#9cb3d3] to-[#4b6da3]">
          <svg width="9" height="5" viewBox="0 0 9 5"><path d="M.5 1.500h8v2.500h-8z" fill="#fff" stroke="#444" strokeWidth=".5" /></svg>
        </span>
        <span className="flex w-[18px] items-center justify-center border-r border-[#2d3f5e] bg-linear-to-b from-[#9cb3d3] to-[#4b6da3]">
          <svg width="8" height="8" viewBox="0 0 8 8"><path d="M2.500 1h4.500v4.500H5.500M1 2.500h4.500V7H1z" fill="none" stroke="#fff" strokeWidth="1.200" /></svg>
        </span>
        <span className="flex w-[30px] items-center justify-center bg-linear-to-b from-[#dc9484] to-[#b92f1c]">
          <svg width="8" height="7" viewBox="0 0 8 7"><path d="M1 1l6 5M7 1L1 6" stroke="#fff" strokeWidth="1.800" /></svg>
        </span>
      </div>
    </div>
  );
}

function MenuBar() {
  return (
    <div className="flex h-[13.500px] shrink-0 items-center gap-[9.750px] border-b border-[#cfcfcf] bg-[#f1f1f1] pt-[2.500px] pl-[6px]">
      {menus.map(([name, key, w]) => (
        <Fit key={name} w={w} className="text-[8.800px] leading-none text-[#111]">
          {name}
          {key && <>(<u className="mx-[0.500px] underline-offset-1">{key}</u>)</>}
        </Fit>
      ))}
    </div>
  );
}

const List = ({ names, off, w }) => names.split(" ").map((n) => <Icon key={n} name={n} off={off} w={w} />);

function Toolbars({ editing }) {
  return (
    <>
      <Bar className="h-[27px]">
        <Grip w={6.6} />
        <List names="doc folder save saveas composer manager" />
        <Grip />
        <Icon name="touch" />
        <Icon name="hand" on={!editing} />
        <List names="pansel zin zout znat zfull zsel zlayer zlast znext refresh" />
        <Grip w={8} />
        <Icon name="identify" /><Icon name="action" /><Arrow light /><Icon name="select" /><Arrow />
        <List names="desel expr table abacus measure" /><Arrow />
        <List names="tip bmnew bm" />
        <Icon name="text" w={24.5} /><Arrow />
        <Grip w={6} />
        <List names="help what" />
      </Bar>
      <Bar className="h-[25px]">
        <Grip w={6.6} />
        <Icon name="pencils" />
        <Icon name="pencil" on={editing} />
        <Icon name="saveedit" off={!editing} /><Icon name="addfeat" off={!editing} /><Icon name="movefeat" off={!editing} />
        <Icon name="node" on={editing} off={!editing} />
        <List names="trash cut copy paste" /><Icon name="crossed" off={!editing} />
        <Grip w={31} />
        <List names="label labelpin labelpin2 labeleye labelmove" />
        <span className="w-[7px]" /><Icon name="more" />
        <Grip w={2.4} />
        <List names="bgb csw" />
        <Grip w={8} />
        <List names="python route binoc identify" />
        <Grip w={9} />
        <List names="cross person sat vr tri swirl" />
      </Bar>
      <Bar className="h-[25px]">
        <Grip w={6.6} />
        <List names="vadd raster pg feather mssql oracle oraras wms wcs wfs comma vnew" />
        <Arrow />
        <Icon name="gps" />
        <Grip w={290} />
        <Icon name="bk1" /><Icon name="bk2" /><Icon name="bk3" off />
        <span className="mx-px h-[20px] w-px shrink-0 bg-[#d4d4d4]" />
        <Icon name="vs1" /><Icon name="vs2" />
        <List names="vs3 vs4 tools sheet1 sheet2" off />
      </Bar>
      <div className="h-px shrink-0 bg-[#dcdcdc]" />
    </>
  );
}

function Check({ on }) {
  return (
    <svg width="9" height="9" viewBox="0 0 9 9" className="shrink-0">
      <rect x=".5" y=".5" width="8" height="8" rx="1" fill="#fbfbfb" stroke="#d4d4d4" />
      {on && <path d="M2.200 2.200l4.600 4.600M6.800 2.200L2.200 6.800" stroke="#000" strokeWidth="1.900" />}
    </svg>
  );
}

function Symbol({ kind }) {
  return (
    <svg width="12" height="11" viewBox="0 0 12 11" className="shrink-0">
      {kind === "polygon" && <rect x="1" y=".3" width="10" height="10.400" fill="#a334a3" stroke="#6e246e" strokeWidth=".7" />}
      {kind === "point" && <circle cx="6" cy="5.500" r="2.500" fill="#8c2a63" stroke="#3d1430" strokeWidth=".8" />}
      {kind === "line" && <path d="M1.500 5.500h10" stroke="#7c99a5" strokeWidth="1" />}
      {["brown", "yellow", "orange"].includes(kind) && (
        <g>
          <path d="M.5 6h11" stroke="#8fa8c8" strokeWidth="1" />
          <path
            d="M3 10l.8-3L7.500 1.500l2 1.200L5.500 8z"
            fill={kind === "brown" ? "#b3735b" : kind === "yellow" ? "#e9cb3e" : "#e8762c"}
            stroke={kind === "yellow" ? "#b8a03a" : "#9d5c42"}
            strokeWidth=".5"
          />
        </g>
      )}
    </svg>
  );
}

function LayerPanel({ lines, selected }) {
  const rows = [
    { name: "polygon", w: 31, kind: "polygon", on: true },
    { name: "postoffice", w: 41, kind: "point" },
    { name: "20150101-海岸線", w: 67, kind: lines[0], on: true, current: true },
    { name: "20150101-水涯線", w: 67, kind: lines[1], on: true },
  ];
  const dots = "h-[3px] flex-1 bg-[radial-gradient(#bdbdbd_0.7px,transparent_0.8px)] bg-size-[3px_3px]";
  return (
    <div className="flex w-[188px] shrink-0 flex-col">
      <div className="flex h-[10px] shrink-0 items-center gap-[4px] pr-[1px] pl-[2px]">
        <span className={dots} />
        <Fit w={15} className="text-[8px] leading-none text-black">レイヤ</Fit>
        <span className={dots} />
        <span className="flex gap-px">
          <svg width="9" height="9" viewBox="0 0 9 9"><rect x=".5" y=".5" width="8" height="8" rx="1.500" fill="#f5f5f5" stroke="#888" /><path d="M3.500 2h3.500v3H5.500M2 4h3.500v3H2z" fill="none" stroke="#111" /></svg>
          <svg width="9" height="9" viewBox="0 0 9 9"><rect x=".5" y=".5" width="8" height="8" rx="1.500" fill="#f5f5f5" stroke="#888" /><path d="M2.500 2.500l4 4M6.500 2.500l-4 4" stroke="#111" strokeWidth="1.200" /></svg>
        </span>
      </div>
      <div className="flex h-[23px] shrink-0 items-center pb-[3px]">
        <List names="lgroup leye lfilter lexp lcol lremove" w={21} />
      </div>
      <div className={`flex min-h-0 flex-1 flex-col border bg-white ${selected ? "border-[#3b96ee]" : "border-[#b9b9b9]"}`}>
        {rows.map((r) => {
          const hot = r.current && selected;
          return (
            <div
              key={r.name}
              className={`flex h-[10.300px] shrink-0 items-center pl-[7px] ${hot ? "bg-[#3399f3]" : r.current ? "bg-[#f0f0f0]" : ""}`}
            >
              <span className="h-full w-[7px] border-l border-dotted border-[#cdcdcd]"><span className="block h-1/2 border-b border-dotted border-[#cdcdcd]" /></span>
              <span className="ml-px flex items-center gap-[3px]"><Check on={r.on} /><Symbol kind={r.kind} /></span>
              <span className={`ml-[2px] flex ${hot ? "text-white" : "text-black"}`}>
                <Fit w={r.w} className={`font-['DejaVu_Sans','Noto_Sans_CJK_JP',sans-serif] text-[7.500px] leading-none font-bold ${r.current ? "underline" : ""}`}>{r.name}</Fit>
              </span>
            </div>
          );
        })}
        <div className="flex h-[9px] shrink-0 items-center pl-[7px]">
          <span className="h-full w-[7px] border-l border-dotted border-[#cdcdcd]"><span className="block h-1/2 border-b border-dotted border-[#cdcdcd]" /></span>
          <span className="mr-[3px] ml-px flex"><Check /></span>
          <span className="flex pb-px"><Fit w={34} className="text-[8.500px] leading-none font-bold text-black">標準地図</Fit></span>
        </div>
      </div>
    </div>
  );
}

const Mark = ({ x, y, dark }) => (
  <path d={`M${x - 2.5} ${y - 2.5}l5 5M${x + 2.5} ${y - 2.5}l-5 5`} stroke={dark ? "#b01c1c" : "#f04848"} strokeWidth="1" />
);

function StatusBar({ coord }) {
  const t = "text-[8.500px] leading-none text-[#151515]";
  return (
    <div className="flex h-[20px] shrink-0 items-center bg-[#f0f0f0] pb-px pl-[148px]">
      <Fit w={113} className="text-[8.800px] leading-none text-[#0000ee] underline underline-offset-1">更新されたプラグインが使用可能です</Fit>
      <span className="ml-[7px] flex h-[13px] w-[13px] items-center justify-center rounded-[2px] border border-[#a6a6a6] bg-[#e4e4e4]">
        <svg width="10" height="10" viewBox="0 0 10 10"><path d="M1.500 3a2 2 0 014 0L4 5a1.500 1.500 0 01-2.500-2zM5 6.500a2 2 0 014 0 2 2 0 01-4 0zM2.500 4l5 4M4 2l4 5" fill="none" stroke="#333" strokeWidth="1.100" /></svg>
      </span>
      <span className="ml-[6px] flex"><Fit w={17} className={t}>座標:</Fit></span>
      <span className="ml-[6px] flex h-[13px] w-[194px] items-center justify-center rounded-[1px] border border-[#bdbdbd] bg-white">
        <Fit w={74} className={t}>{coord}</Fit>
      </span>
      <span className="ml-[6px] flex"><Fit w={15} className={t}>縮尺</Fit></span>
      <span className="ml-[6px] flex h-[13px] w-[54px] items-center justify-between border border-[#bdbdbd] bg-white pl-[2px]">
        <Fit w={13} className={t}>1:30</Fit>
        <span className="flex h-full w-[10px] items-center justify-center border-l border-[#c6c6c6] bg-[#f2f2f2]">
          <svg width="6" height="4" viewBox="0 0 6 4"><path d="M.5 .5h5L3 3.500z" fill="#111" /></svg>
        </span>
      </span>
      <span className="ml-[6px] flex"><Fit w={17} className={t}>回転:</Fit></span>
      <span className="ml-[6px] flex h-[16px] w-[65px] items-center justify-between border border-[#bdbdbd] bg-white pl-[2px]">
        <Fit w={9} className={t}>0.0</Fit>
        <span className="flex h-full w-[10px] flex-col items-center justify-around border-l border-[#c6c6c6] bg-[#f2f2f2]">
          <svg width="5" height="4" viewBox="0 0 5 4"><path d="M0 3.500h5L2.500 .5z" fill="#111" /></svg>
          <svg width="5" height="4" viewBox="0 0 5 4"><path d="M0 .5h5L2.500 3.500z" fill="#111" /></svg>
        </span>
      </span>
      <span className="ml-[3px] flex items-center gap-[3px]"><Check on /><Fit w={17} className={t}>レンダ</Fit></span>
      <svg width="11" height="11" viewBox="0 0 11 11" className="mr-[2.500px] ml-[11.500px] shrink-0"><circle cx="5.500" cy="5.500" r="3.600" fill="#999" stroke="#3b3b3b" strokeWidth="2" /><path d="M5.500 .5v10M.5 5.500h10" stroke="#3b3b3b" strokeWidth="1.300" /><circle cx="5.500" cy="5.500" r="1.900" fill="#eee" /></svg>
      <Fit w={58} className={t}>EPSG:2452 (OTF)</Fit>
      <svg width="11" height="11" viewBox="0 0 11 11" className="ml-[14.500px] shrink-0"><circle cx="5.500" cy="5" r="4.500" fill="#6b6b6b" /><path d="M6 8l3.500 2.500L9 6z" fill="#6b6b6b" /></svg>
    </div>
  );
}

function QgisWindow({ place, editing, lines, selected, mapFocus, coord, children }) {
  return (
    <section className={`absolute flex h-[639px] w-[831px] origin-top-left flex-col overflow-hidden bg-[#f0f0f0] font-['Noto_Sans_CJK_JP',sans-serif] ${place}`}>
      <TitleBar />
      <MenuBar />
      <Toolbars editing={editing} />
      <div className="flex min-h-0 flex-1">
        <LayerPanel lines={lines} selected={selected} />
        <div className="w-[4px] shrink-0 bg-[#ececec] bg-[radial-gradient(#cccccc_0.7px,transparent_0.8px)] bg-size-[4px_4px]" />
        <div className={`flex flex-1 overflow-hidden border bg-white ${mapFocus ? "border-[#3b96ee]" : "border-[#b4b4b4]"}`}>
          <svg width="638" height="514" viewBox="0 0 638 514" className="-mt-px shrink-0" fill="none" strokeWidth="1">{children}</svg>
        </div>
      </div>
      <StatusBar coord={coord} />
    </section>
  );
}

export default function App() {
  const big = "leading-none font-bold font-['Noto_Sans_CJK_JP',sans-serif]";
  return (
    <main className="relative h-[848px] w-[1472px] overflow-hidden bg-white">
      <QgisWindow place="top-[66px] left-0" editing selected lines={["brown", "yellow"]} coord="46379.358,-176409.228">
        <path d="M200 264.500L402 0" stroke="#8ab4e8" />
        <path d="M0 274L200 264.500L638 356" stroke="#4b4b4b" />
        <Mark x={200} y={264.5} dark />
      </QgisWindow>

      <QgisWindow place="top-[292px] left-[748px] scale-[0.871]" editing mapFocus lines={["brown", "orange"]} coord="46378.214,-176405.393">
        <path d="M208.400 253.500L402 0" stroke="#8ab4e8" />
        <path d="M0 274L200 264.500M210.500 269.500L638 357" stroke="#4b4b4b" />
        <Mark x={208.4} y={253.5} />
        <Mark x={200} y={264} />
        <rect x="207.200" y="265.500" width="7" height="7" fill="#fff" stroke="#f02323" strokeWidth="1.800" />
        <path d="M209 268h3.500M209 270.300h3.500" stroke="#f02323" />
      </QgisWindow>

      <QgisWindow place="top-0 left-[782px] scale-[0.8303]" lines={["line", "orange"]} coord="46379.358,-176405.440">
        <path d="M208.400 254L402 0" stroke="#8ab4e8" />
        <path d="M0 274L201 265L638 355.500" stroke="#4b4b4b" />
        <Mark x={208.4} y={254} />
      </QgisWindow>

      <div className="absolute top-[476px] left-[267px] flex">
        <Fit w={247} className={`text-[28px] text-black ${big}`}>頂点が重なっている</Fit>
      </div>
      <div className="absolute top-[451px] left-[1058px] flex">
        <Fit w={240} className={`text-[28px] text-black ${big}`}>頂点をずらしてみる</Fit>
      </div>
      <div className="absolute top-[774px] left-[52px] flex">
        <Fit w={655} className={`text-[38px] text-[#00b050] ${big}`}>ラインやポリゴンは頂点でつながっている</Fit>
      </div>
    </main>
  );
}
